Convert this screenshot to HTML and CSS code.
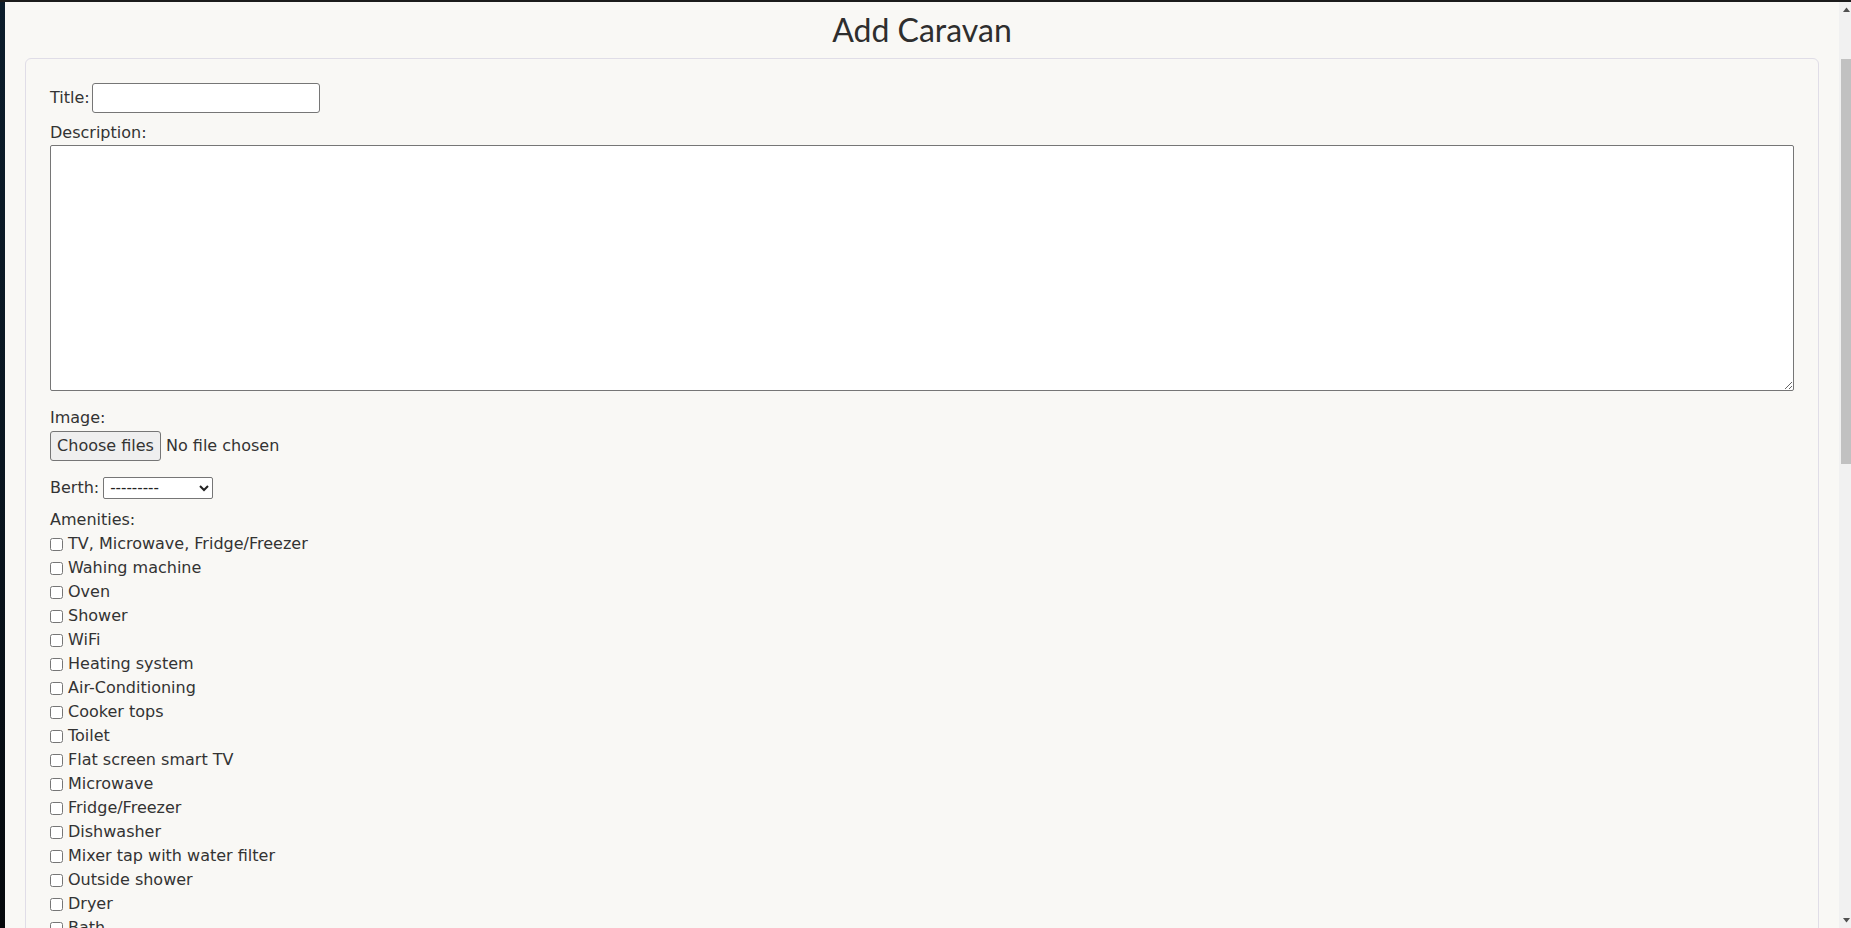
FILE: index.html
```html
<!DOCTYPE html>
<html lang="en">
<head>
<meta charset="utf-8">
<title>Add Caravan</title>
<link rel="stylesheet" href="styles.css">
</head>
<body>
<div class="frame">
  <div class="topbar"></div>
  <div class="window">
    <div class="wallpaper"></div>
    <main class="page">
      <h1 class="title">Add Caravan</h1>
      <form class="card">
        <div class="row-inline title-row">
          <label for="f-title">Title:</label>
          <input id="f-title" class="text-input" type="text">
        </div>
        <label class="field-label desc-label" for="f-desc">Description:</label>
        <textarea id="f-desc" class="textarea"></textarea>
        <div class="field-label image-label">Image:</div>
        <div class="file-row">
          <button type="button" class="file-btn">Choose files</button>
          <span class="file-name">No file chosen</span>
        </div>
        <div class="row-inline berth-row">
          <label for="f-berth">Berth:</label>
          <select id="f-berth" class="select">
            <option>---------</option>
          </select>
        </div>
        <div class="field-label amen-label">Amenities:</div>
        <ul class="amenities">
          <li><label><input type="checkbox">TV, Microwave, Fridge/Freezer</label></li>
          <li><label><input type="checkbox">Wahing machine</label></li>
          <li><label><input type="checkbox">Oven</label></li>
          <li><label><input type="checkbox">Shower</label></li>
          <li><label><input type="checkbox">WiFi</label></li>
          <li><label><input type="checkbox">Heating system</label></li>
          <li><label><input type="checkbox">Air-Conditioning</label></li>
          <li><label><input type="checkbox">Cooker tops</label></li>
          <li><label><input type="checkbox">Toilet</label></li>
          <li><label><input type="checkbox">Flat screen smart TV</label></li>
          <li><label><input type="checkbox">Microwave</label></li>
          <li><label><input type="checkbox">Fridge/Freezer</label></li>
          <li><label><input type="checkbox">Dishwasher</label></li>
          <li><label><input type="checkbox">Mixer tap with water filter</label></li>
          <li><label><input type="checkbox">Outside shower</label></li>
          <li><label><input type="checkbox">Dryer</label></li>
          <li><label><input type="checkbox">Bath</label></li>
        </ul>
      </form>
    </main>
    <div class="scrollbar">
      <div class="sb-btn">
        <svg width="12" height="15" viewBox="0 0 12 15"><polygon points="4,10 7.5,5.5 11,10" fill="#505050"/></svg>
      </div>
      <div class="sb-thumb"></div>
      <div class="sb-fill"></div>
      <div class="sb-btn">
        <svg width="12" height="15" viewBox="0 0 12 15"><polygon points="4,5 11,5 7.5,9.5" fill="#505050"/></svg>
      </div>
    </div>
  </div>
</div>
</body>
</html>
```

FILE: styles.css
```css
* { box-sizing: border-box; }

html, body {
  margin: 0;
  padding: 0;
  height: 100%;
  overflow: hidden;
}

body {
  font-family: "DejaVu Sans", "Liberation Sans", sans-serif;
  font-size: 16px;
  line-height: 24px;
  color: #333333;
  background: #f9f8f5;
}

.frame {
  display: flex;
  flex-direction: column;
  height: 100vh;
}

.topbar {
  height: 2px;
  flex: none;
  background: #1c1c1c;
}

.window {
  flex: 1;
  display: flex;
  min-height: 0;
}

.wallpaper {
  width: 5px;
  flex: none;
  background: linear-gradient(180deg, #0c1d2b 0%, #0a1620 50%, #06090c 100%);
}

.page {
  flex: 1;
  min-width: 0;
  overflow: hidden;
  background: #f9f8f5;
}

.title {
  font-family: Lato, "Liberation Sans", sans-serif;
  font-weight: 400;
  font-size: 32px;
  line-height: 41px;
  text-align: center;
  margin: 7px 0 8px;
  color: #2e2e2e;
}

.card {
  margin: 0 20px;
  padding: 24px;
  border: 1px solid #e0dde7;
  border-radius: 6px;
  background: #f9f8f5;
  display: flex;
  flex-direction: column;
  align-items: flex-start;
}

.row-inline {
  display: flex;
  align-items: center;
}

.title-row {
  height: 30px;
  gap: 2px;
}

.text-input {
  width: 228px;
  height: 30px;
  border: 1px solid #767676;
  border-radius: 3px;
  background: #ffffff;
  margin: 0;
  padding: 1px 4px;
  font: inherit;
}

.field-label {
  display: block;
}

.desc-label {
  margin-top: 8px;
}

.textarea {
  display: block;
  width: 100%;
  height: 246px;
  border: 1px solid #767676;
  border-radius: 2px;
  background: #ffffff;
  margin: 0;
  padding: 2px;
  font: inherit;
}

.image-label {
  margin-top: 15px;
}

.file-row {
  display: flex;
  align-items: center;
  gap: 5px;
  margin-top: 1px;
}

.file-btn {
  height: 30px;
  width: 111px;
  padding: 0;
  border: 1px solid #767676;
  border-radius: 3px;
  background: #efefef;
  color: #333333;
  font: inherit;
}

.berth-row {
  height: 24px;
  gap: 4px;
  margin-top: 15px;
}

.select {
  width: 110px;
  height: 22px;
  margin: 0;
  padding: 0 0 0 2px;
  border: 1px solid #767676;
  border-radius: 2px;
  background: #ffffff;
  color: #222222;
  font-family: "DejaVu Sans", sans-serif;
  font-size: 15px;
}

.amen-label {
  margin-top: 8px;
}

.amenities {
  list-style: none;
  margin: 0;
  padding: 0;
}

.amenities li {
  height: 24px;
}

.amenities label {
  display: flex;
  align-items: center;
  height: 24px;
}

.amenities input {
  width: 13px;
  height: 13px;
  margin: 0 5px 0 0;
}

.scrollbar {
  width: 12px;
  flex: none;
  display: flex;
  flex-direction: column;
  background: #f1f1f1;
}

.sb-btn {
  height: 15px;
  flex: none;
}

.sb-btn svg {
  display: block;
}

.sb-thumb {
  flex: none;
  height: 405px;
  margin: 42px 0 0 2px;
  background: #c1c1c1;
}

.sb-fill {
  flex: 1;
}
```
